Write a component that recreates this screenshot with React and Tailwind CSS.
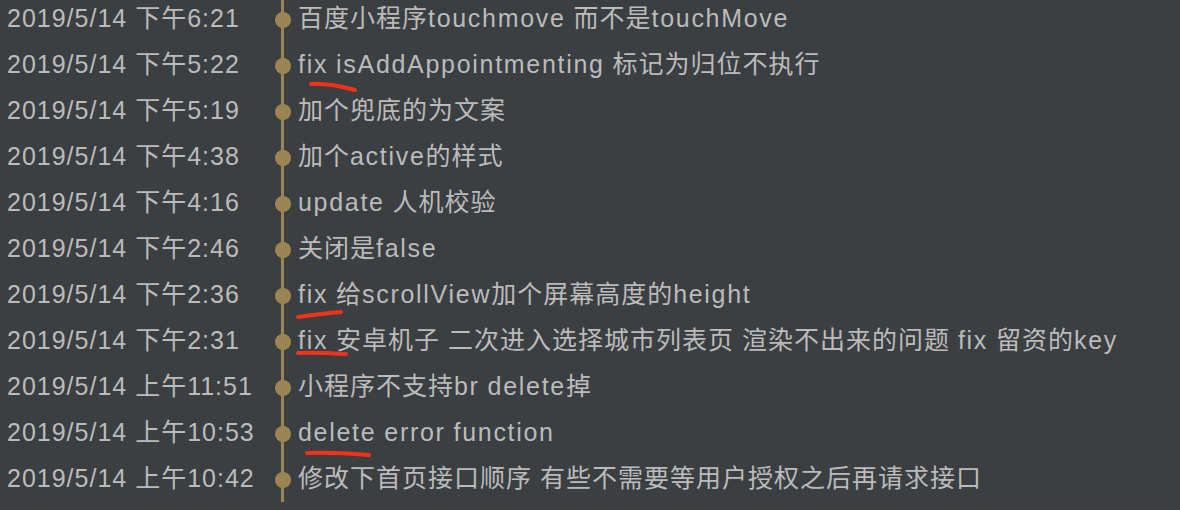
import React from "react";

const commits = [
  { time: "2019/5/14 下午6:21", msg: "百度小程序touchmove 而不是touchMove" },
  { time: "2019/5/14 下午5:22", msg: "fix isAddAppointmenting 标记为归位不执行" },
  { time: "2019/5/14 下午5:19", msg: "加个兜底的为文案" },
  { time: "2019/5/14 下午4:38", msg: "加个active的样式" },
  { time: "2019/5/14 下午4:16", msg: "update 人机校验" },
  { time: "2019/5/14 下午2:46", msg: "关闭是false" },
  { time: "2019/5/14 下午2:36", msg: "fix 给scrollView加个屏幕高度的height" },
  { time: "2019/5/14 下午2:31", msg: "fix 安卓机子 二次进入选择城市列表页 渲染不出来的问题 fix 留资的key" },
  { time: "2019/5/14 上午11:51", msg: "小程序不支持br delete掉" },
  { time: "2019/5/14 上午10:53", msg: "delete error function" },
  { time: "2019/5/14 上午10:42", msg: "修改下首页接口顺序 有些不需要等用户授权之后再请求接口" },
];

// latin words render a bit wider in the original, give them extra tracking
function Msg({ text }) {
  const parts = text.split(/([A-Za-z]+)/);
  return (
    <>
      {parts.map((p, i) =>
        /^[A-Za-z]+$/.test(p) ? (
          <span key={i} className="tracking-[1.7px]">{p}</span>
        ) : (
          <span key={i}>{p}</span>
        )
      )}
    </>
  );
}

// hand-drawn red marks on top of the log
function Marks() {
  return (
    <svg className="absolute inset-0 pointer-events-none" width="1180" height="510">
      <g stroke="#f2331a" strokeWidth="4" strokeLinecap="round" fill="none">
        <path d="M311 84 C 325 83, 340 86, 355 90" />
        <path d="M298 317 C 312 315, 328 313, 341 312" />
        <path d="M298 353 C 312 352, 330 353, 346 354" />
        <path d="M307 453 C 325 452, 345 453, 369 455" />
      </g>
    </svg>
  );
}

export default function App() {
  return (
    <div
      className="relative w-[1180px] h-[510px] overflow-hidden bg-[#3c3f41] text-[#bbbbbb] text-[25px] tracking-[1px]"
      style={{ fontFamily: '"Liberation Sans", "Noto Sans CJK SC", sans-serif' }}
    >
      <div className="mt-[-4px]">
        {commits.map((c, i) => (
          <div key={i} className="flex h-[46px] items-center">
            <div className="w-[275px] pl-[7px] whitespace-nowrap">{c.time}</div>
            <div className="relative w-4 self-stretch">
              <div className="absolute inset-y-0 left-[6px] w-[3px] bg-[#9c8554]" />
              <div className="absolute left-0 top-[16px] w-4 h-4 rounded-full bg-[#9c8554]" />
            </div>
            <div className="pl-[7px] whitespace-nowrap">
              <Msg text={c.msg} />
            </div>
          </div>
        ))}
      </div>
      <Marks />
    </div>
  );
}
